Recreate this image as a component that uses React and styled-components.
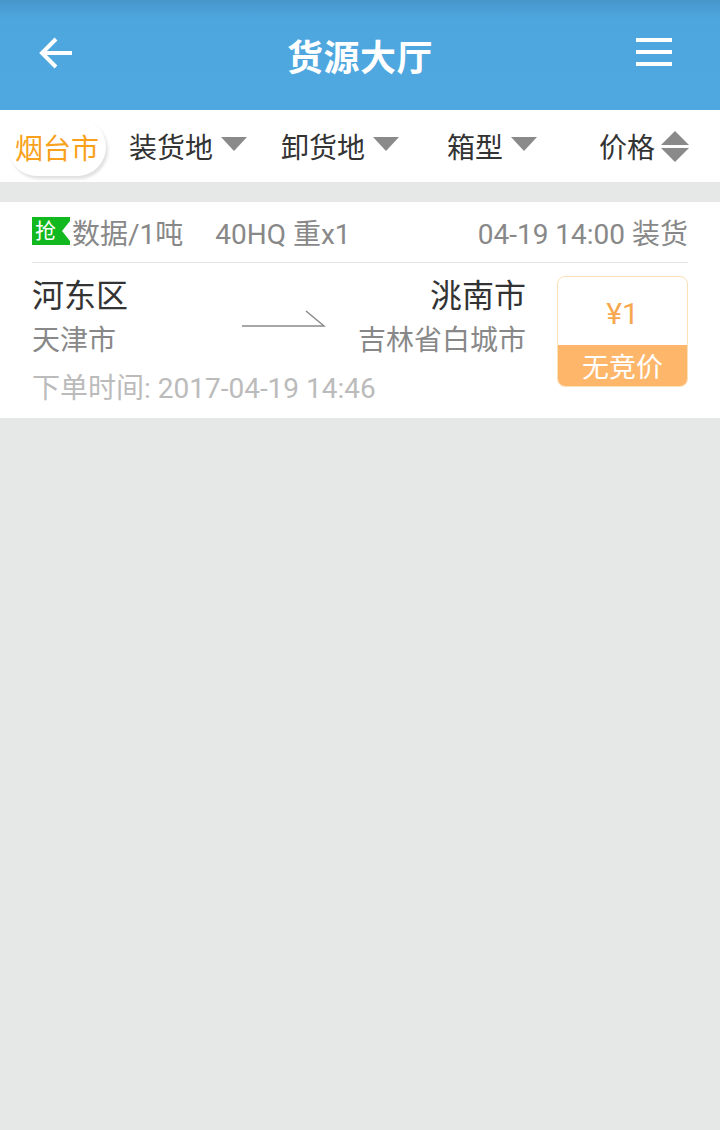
import React from 'react';
import styled, { createGlobalStyle } from 'styled-components';

const GlobalStyle = createGlobalStyle`
  html, body {
    margin: 0;
    padding: 0;
    background: #e6e8e7;
    font-family: Roboto, "Noto Sans CJK SC", sans-serif;
  }
`;

const Page = styled.div`
  width: 720px;
  min-height: 1130px;
  background: #e6e8e7;
`;

const Header = styled.header`
  height: 110px;
  display: grid;
  grid-template-columns: 1fr auto 1fr;
  align-items: center;
  padding: 0 36px;
  background: linear-gradient(180deg, #4696ca 0px, #4ea6de 18px, #50a8e0 100%);
  color: #fff;
`;

const IconButton = styled.div`
  width: 40px;
  height: 40px;
  justify-self: ${(p) => (p.$end ? 'end' : 'start')};
  margin-right: ${(p) => (p.$end ? 10 : 0)}px;
  margin-top: -3px;
  svg {
    display: block;
  }
`;

const Title = styled.h1`
  margin: 0;
  font-size: 36px;
  font-weight: 700;
  letter-spacing: 0.5px;
  font-family: "Noto Sans CJK SC", sans-serif;
`;

const FilterBar = styled.nav`
  height: 72px;
  background: #fff;
  display: grid;
  grid-template-columns: 112px repeat(4, 1fr);
  align-items: center;
`;

const FilterCell = styled.div`
  display: flex;
  align-items: center;
  justify-content: center;
  gap: ${(p) => p.$gap || 8}px;
  font-size: 28px;
  color: #333;
  font-family: "Noto Sans CJK SC", sans-serif;
`;

const CityPill = styled.div`
  width: 98px;
  height: 58px;
  margin-left: 8px;
  margin-top: 2px;
  border-radius: 29px;
  background: #fff;
  box-shadow: 2px 3px 3px rgba(0, 0, 0, 0.12);
  display: flex;
  align-items: center;
  justify-content: center;
  color: #f9a11b;
  font-size: 28px;
  font-family: "Noto Sans CJK SC", sans-serif;
`;

const DownTri = styled.span`
  width: 0;
  height: 0;
  border-left: 13px solid transparent;
  border-right: 13px solid transparent;
  border-top: 14px solid #8a8a8a;
  margin-top: -4px;
`;

const SortTri = styled.span`
  display: flex;
  flex-direction: column;
  gap: 3px;
  &::before,
  &::after {
    content: '';
    width: 0;
    height: 0;
    border-left: 14px solid transparent;
    border-right: 14px solid transparent;
  }
  &::before {
    border-bottom: 14px solid #8a8a8a;
  }
  &::after {
    border-top: 14px solid #8a8a8a;
  }
`;

const Card = styled.section`
  margin-top: 20px;
  background: #fff;
  padding: 0 32px 11px;
`;

const TopRow = styled.div`
  height: 60px;
  display: flex;
  align-items: center;
  border-bottom: 1px solid #e3e3e3;
  font-size: 28px;
  color: #888;
`;

const Badge = styled.span`
  position: relative;
  width: 38px;
  height: 28px;
  background: #11b81e;
  color: #fff;
  font-size: 21px;
  line-height: 28px;
  padding-left: 3px;
  margin-right: 2px;
  box-sizing: border-box;
  margin-top: -2px;
  &::after {
    content: '';
    position: absolute;
    right: 0;
    top: 4px;
    border-top: 10px solid transparent;
    border-bottom: 10px solid transparent;
    border-right: 8px solid #fff;
  }
`;

const Info = styled.span`
  margin-left: ${(p) => p.$ml || 0}px;
  margin-right: ${(p) => (p.$push ? 'auto' : '0')};
`;

const Body = styled.div`
  display: flex;
  padding-top: 13px;
`;

const Main = styled.div`
  flex: 1;
`;

const Route = styled.div`
  display: grid;
  grid-template-columns: 1fr 82px 1fr;
  align-items: center;
`;

const Place = styled.div`
  text-align: ${(p) => (p.$right ? 'right' : 'left')};
`;

const PlaceName = styled.div`
  font-size: 32px;
  line-height: 40px;
  color: #333;
`;

const PlaceSub = styled.div`
  font-size: 28px;
  line-height: 36px;
  margin-top: 7px;
  color: #888;
`;

const ArrowWrap = styled.div`
  margin-left: 4px;
  svg {
    display: block;
  }
`;

const OrderTime = styled.div`
  margin-top: 12px;
  font-size: 28px;
  line-height: 36px;
  color: #bbb;
`;

const PriceBox = styled.div`
  width: 131px;
  height: 111px;
  margin-left: 31px;
  border: 1px solid #fde0b8;
  border-radius: 8px;
  overflow: hidden;
  box-sizing: border-box;
  display: flex;
  flex-direction: column;
`;

const PriceValue = styled.div`
  flex: 1;
  display: flex;
  align-items: center;
  justify-content: center;
  color: #f7a84e;
  font-size: 30px;
  padding-top: 4px;
`;

const PriceTag = styled.div`
  height: 41px;
  background: #feb76a;
  color: #fff;
  font-size: 27px;
  display: flex;
  align-items: center;
  justify-content: center;
`;

const BackIcon = () => (
  <svg width="40" height="40" viewBox="0 0 40 40">
    <path
      d="M36 19H6M20 5L6 19l14 14"
      fill="none"
      stroke="#fff"
      strokeWidth="4"
      strokeLinecap="butt"
      strokeLinejoin="miter"
    />
  </svg>
);

const MenuIcon = () => (
  <svg width="40" height="40" viewBox="0 0 40 40">
    <rect x="2" y="4" width="36" height="4" fill="#fff" />
    <rect x="2" y="16" width="36" height="4" fill="#fff" />
    <rect x="2" y="28" width="36" height="4" fill="#fff" />
  </svg>
);

const RouteArrow = () => (
  <svg width="84" height="18" viewBox="0 0 84 18">
    <path d="M0 17H82L64 2" fill="none" stroke="#8a8a8a" strokeWidth="1.5" />
  </svg>
);

const filters = ['装货地', '卸货地', '箱型'];

export default function App() {
  return (
    <>
      <GlobalStyle />
      <Page>
        <Header>
          <IconButton>
            <BackIcon />
          </IconButton>
          <Title>货源大厅</Title>
          <IconButton $end>
            <MenuIcon />
          </IconButton>
        </Header>

        <FilterBar>
          <div>
            <CityPill>烟台市</CityPill>
          </div>
          {filters.map((f) => (
            <FilterCell key={f}>
              {f}
              <DownTri />
            </FilterCell>
          ))}
          <FilterCell $gap={6}>
            价格
            <SortTri />
          </FilterCell>
        </FilterBar>

        <Card>
          <TopRow>
            <Badge>抢</Badge>
            <Info>数据/1吨</Info>
            <Info $ml={32} $push>40HQ 重x1</Info>
            <Info>04-19 14:00 装货</Info>
          </TopRow>
          <Body>
            <Main>
              <Route>
                <Place>
                  <PlaceName>河东区</PlaceName>
                  <PlaceSub>天津市</PlaceSub>
                </Place>
                <ArrowWrap>
                  <RouteArrow />
                </ArrowWrap>
                <Place $right>
                  <PlaceName>洮南市</PlaceName>
                  <PlaceSub>吉林省白城市</PlaceSub>
                </Place>
              </Route>
              <OrderTime>下单时间: 2017-04-19 14:46</OrderTime>
            </Main>
            <PriceBox>
              <PriceValue>¥1</PriceValue>
              <PriceTag>无竞价</PriceTag>
            </PriceBox>
          </Body>
        </Card>
      </Page>
    </>
  );
}
